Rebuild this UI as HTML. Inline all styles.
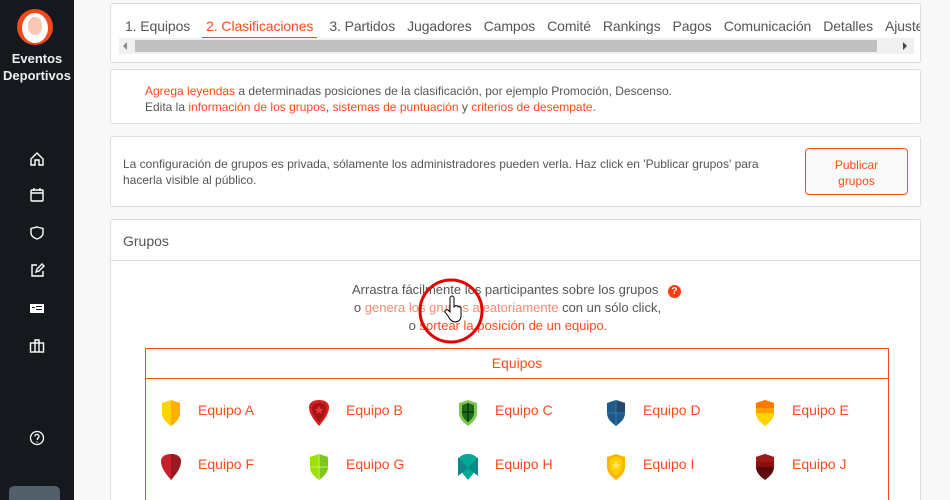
<!DOCTYPE html>
<html><head><meta charset="utf-8"><style>
*{box-sizing:border-box;margin:0;padding:0}
html,body{width:950px;height:500px;overflow:hidden}
body{background:#f8f8f8;font-family:"Liberation Sans",sans-serif;color:#555;position:relative}
.sb{position:absolute;left:0;top:0;width:74px;height:500px;background:#15191e;overflow:hidden}
.av{position:absolute;left:17px;top:9px;width:36px;height:36px;border-radius:50%;background:#f04a1a;overflow:hidden}
.av i{position:absolute;left:5px;top:4px;width:26px;height:30px;border-radius:50%;background:#fff}
.av b{position:absolute;left:11px;top:8px;width:14px;height:18px;border-radius:45%;background:#f9c9b6}
.name{position:absolute;left:0;width:74px;top:50px;text-align:center;color:#eee;font-weight:bold;font-size:13px;line-height:17px}
.ic{position:absolute;left:29px;width:16px;height:16px}
.p{position:absolute;left:110px;width:811px;background:#fff;border:1px solid #ddd;border-radius:3px;overflow:hidden}
.o{color:#ff4a1c}
.tabs{position:absolute;left:14px;top:14px;font-size:14px;white-space:nowrap;color:#555;letter-spacing:-0.1px}
.tabs span{margin-right:12px}
.t{font-size:12px;line-height:16px}
.team{position:absolute;font-size:14px;color:#ff4a1c}
.team svg{position:absolute;left:0;top:-3px}
.team span{position:absolute;left:38px;top:0;white-space:nowrap}
</style></head><body>
<div class="sb">
<div class="av"><i></i><b></b></div>
<div class="name">Eventos<br>Deportivos</div>
<svg class="ic" style="top:151px" viewBox="0 0 16 16" fill="none" stroke="#fff" stroke-width="1.4"><path d="M2 8L8 2l6 6v6h-4v-5H6v5H2z"/></svg>
<svg class="ic" style="top:187px" viewBox="0 0 16 16" fill="none" stroke="#fff" stroke-width="1.4"><rect x="2" y="3" width="12" height="11" rx="1"/><path d="M2 6h12M5 1v3M11 1v3"/></svg>
<svg class="ic" style="top:225px" viewBox="0 0 16 16" fill="none" stroke="#fff" stroke-width="1.4"><path d="M8 2l6 1.5V8c0 3-3 5-6 6-3-1-6-3-6-6V3.5z"/></svg>
<svg class="ic" style="top:262px" viewBox="0 0 16 16" fill="none" stroke="#fff" stroke-width="1.4"><path d="M8 3H3v11h11V9M7 10l1-3 5-5 2 2-5 5z"/></svg>
<svg class="ic" style="top:300px" viewBox="0 0 16 16"><rect x="1" y="4" width="14" height="9" fill="#fff"/><path d="M3 7h3v1H3zM7 6h6v1H7zM7 9h6v1H7z" fill="#15191e"/></svg>
<svg class="ic" style="top:338px" viewBox="0 0 16 16" fill="none" stroke="#fff" stroke-width="1.4"><rect x="1.5" y="5" width="13" height="9"/><path d="M6 5V2h4v3M6 5v9M10 5v9"/></svg>
<svg class="ic" style="top:430px" viewBox="0 0 16 16" fill="none" stroke="#fff" stroke-width="1.3"><circle cx="8" cy="8" r="6.5"/><path d="M6 6.5a2 2 0 1 1 2.5 1.8V10M8 11.5v1"/></svg>
<div style="position:absolute;left:9px;top:486px;width:51px;height:14px;background:#525f6b;border-radius:5px 5px 0 0"></div>
</div>

<div class="p" style="top:3px;height:60px">
<div class="tabs"><span>1. Equipos</span><span class="o" style="border-bottom:2px solid #ff4a1c;padding:0 4px 3px">2. Clasificaciones</span><span>3. Partidos</span><span>Jugadores</span><span>Campos</span><span>Comité</span><span>Rankings</span><span>Pagos</span><span>Comunicación</span><span>Detalles</span><span>Ajustes</span></div>
<div style="position:absolute;left:8px;top:34px;width:795px;height:16px;background:#f0f0f0"></div>
<div style="position:absolute;left:24px;top:36px;width:742px;height:12px;background:#c0c0c0"></div>
<div style="position:absolute;left:12px;top:38px;border:4px solid transparent;border-right:4px solid #888;border-left:0"></div>
<div style="position:absolute;left:792px;top:38px;border:4px solid transparent;border-left:4px solid #444;border-right:0"></div>
</div>

<div class="p t" style="top:69px;height:55px;padding:13px 0 0 34px"><span class="o">Agrega leyendas</span> a determinadas posiciones de la clasificación, por ejemplo Promoción, Descenso.<br>Edita la <span class="o">información de los grupos</span>, <span class="o">sistemas de puntuación</span> y <span class="o">criterios de desempate</span>.</div>

<div class="p t" style="top:136px;height:71px;padding:19px 0 0 12px"><div style="white-space:nowrap">La configuración de grupos es privada, sólamente los administradores pueden verla. Haz click en 'Publicar grupos' para<br>hacerla visible al público.</div>
<div style="position:absolute;left:694px;top:11px;width:103px;height:47px;border:1px solid #ff4a1c;border-radius:4px;background:#fafafa;color:#ff4a1c;text-align:center;padding-top:8px;font-size:12px;line-height:16px">Publicar<br>grupos</div></div>

<div class="p" style="top:219px;height:281px;border-bottom:none;border-radius:3px 3px 0 0">
<div style="height:41px;border-bottom:1px solid #ddd;padding:13px 12px;font-size:14px">Grupos</div>
<div style="position:absolute;left:0;width:811px;top:61px;text-align:center;font-size:13px;line-height:18px">Arrastra fácilmente los participantes sobre los grupos <span style="display:inline-block;width:13px;height:13px;border-radius:50%;background:#ff3b10;color:#fff;font-size:10px;line-height:13px;font-weight:bold;margin-left:6px">?</span><br><span style="margin-right:18px">o <span style="color:#f58a70">genera los grupos aleatoriamente</span> con un sólo click,</span><br><span style="margin-right:17px">o <span class="o">sortear la posición de un equipo.</span></span></div>
<svg style="position:absolute;left:307px;top:58px" width="66" height="66"><circle cx="33" cy="33" r="31" fill="none" stroke="#e30000" stroke-width="3"/><path d="M32 30v-10a2 2 0 0 1 4 0v9l1-1a2 2 0 0 1 3 1 2 2 0 0 1 3 1v8c0 4-3 6-6 6s-5-2-7-6l-3-4a2 2 0 0 1 3-2l2 2z" fill="#fff" stroke="#000" stroke-width="1"/></svg>
<div style="position:absolute;left:34px;top:128px;width:744px;height:153px;border:1px solid #ff4a1c;border-bottom:none">
<div style="height:30px;border-bottom:1px solid #ff4a1c;text-align:center;color:#ff4a1c;font-size:14px;padding-top:6px">Equipos</div>
</div>
</div>

<div class="team" style="left:160px;top:402px"><svg width="22" height="28" viewBox="0 0 22 28"><path d="M11 1l9 3v10c0 6-5 10-9 13C7 24 2 20 2 14V4z" fill="#ffd200"/><path d="M11 1l9 3v10c0 6-5 10-9 13z" fill="#ffb000"/></svg><span>Equipo A</span></div>
<div class="team" style="left:308px;top:402px"><svg width="22" height="28" viewBox="0 0 22 28"><path d="M11 1c6 0 10 3 10 7 0 7-5 13-10 19C6 21 1 15 1 8c0-4 4-7 10-7z" fill="#d81e1e"/><path d="M11 4c4 0 7 2 7 5 0 5-3 10-7 14C7 19 4 14 4 9c0-3 3-5 7-5z" fill="#a51515"/><path d="M11 7l1.5 3h3l-2.5 2 1 3-3-2-3 2 1-3-2.5-2h3z" fill="#e33"/></svg><span>Equipo B</span></div>
<div class="team" style="left:457px;top:402px"><svg width="22" height="28" viewBox="0 0 22 28"><path d="M11 1l9 3v10c0 6-5 10-9 13C7 24 2 20 2 14V4z" fill="#7ec850"/><path d="M11 4l6 2v8c0 4-3 7-6 9-3-2-6-5-6-9V6z" fill="#1e6b1e"/><path d="M11 4v19M5 13h12" stroke="#0a3a0a" stroke-width="1.5"/></svg><span>Equipo C</span></div>
<div class="team" style="left:605px;top:402px"><svg width="22" height="28" viewBox="0 0 22 28"><path d="M11 1l9 3v10c0 6-5 10-9 13C7 24 2 20 2 14V4z" fill="#1b5a8a"/><path d="M11 1l9 3v10H11z" fill="#24476f"/><path d="M11 1v26M2 14h18" stroke="#3a78a8" stroke-width="1"/></svg><span>Equipo D</span></div>
<div class="team" style="left:754px;top:402px"><svg width="22" height="28" viewBox="0 0 22 28"><path d="M2 4l9-3 9 3v10c0 6-5 10-9 13C7 24 2 20 2 14z" fill="#ffd200"/><path d="M2 4l9-3 9 3v5H2z" fill="#ff7a00"/><path d="M2 9h18v5H2z" fill="#ffa000"/></svg><span>Equipo E</span></div>
<div class="team" style="left:160px;top:456px"><svg width="22" height="28" viewBox="0 0 22 28"><path d="M11 1c6 0 10 3 10 7 0 7-5 13-10 19C6 21 1 15 1 8c0-4 4-7 10-7z" fill="#c8202a"/><path d="M11 1c6 0 10 3 10 7 0 7-5 13-10 19z" fill="#9a1820"/></svg><span>Equipo F</span></div>
<div class="team" style="left:308px;top:456px"><svg width="22" height="28" viewBox="0 0 22 28"><path d="M11 1l9 3v10c0 6-5 10-9 13C7 24 2 20 2 14V4z" fill="#9be000"/><path d="M11 1l9 3v10c0 6-5 10-9 13z" fill="#7cc820"/><path d="M11 1v26M2 14h18" stroke="#c8f070" stroke-width="1"/></svg><span>Equipo G</span></div>
<div class="team" style="left:457px;top:456px"><svg width="22" height="28" viewBox="0 0 22 28"><path d="M11 1c6 0 10 3 10 8 0 6-5 12-10 18C6 21 1 15 1 9c0-5 4-8 10-8z" fill="#00a896"/><path d="M1 4l10 11-10 8z" fill="#0a8888"/><path d="M21 4L11 15l10 8z" fill="#0a8888"/></svg><span>Equipo H</span></div>
<div class="team" style="left:605px;top:456px"><svg width="22" height="28" viewBox="0 0 22 28"><path d="M11 1l9 3v10c0 6-5 10-9 13C7 24 2 20 2 14V4z" fill="#ffb400"/><path d="M11 4l6 2v8c0 4-3 7-6 9-3-2-6-5-6-9V6z" fill="#ffd000"/><path d="M11 8l1.5 3h3l-2.5 2 1 3-3-2-3 2 1-3-2.5-2h3z" fill="#ffe860"/></svg><span>Equipo I</span></div>
<div class="team" style="left:754px;top:456px"><svg width="22" height="28" viewBox="0 0 22 28"><path d="M2 4l9-3 9 3v10c0 6-5 10-9 13C7 24 2 20 2 14z" fill="#5a0a0a"/><path d="M2 4l9-3 9 3v5H2z" fill="#a01818"/><path d="M2 9h18v5H2z" fill="#8a1010"/></svg><span>Equipo J</span></div>
</body></html>
